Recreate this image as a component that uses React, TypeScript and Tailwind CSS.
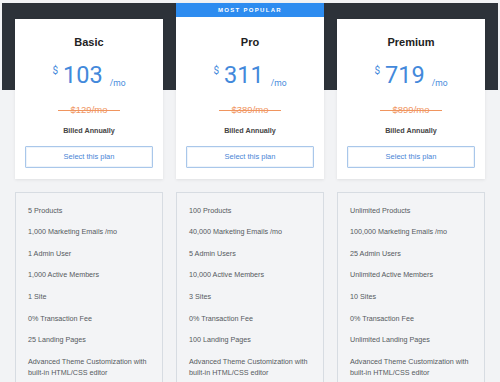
import React from 'react';

interface Plan {
  name: string;
  price: string;
  was: string;
  popular?: boolean;
  features: string[];
}

const plans: Plan[] = [
  {
    name: 'Basic',
    price: '103',
    was: '$129/mo',
    features: [
      '5 Products',
      '1,000 Marketing Emails /mo',
      '1 Admin User',
      '1,000 Active Members',
      '1 Site',
      '0% Transaction Fee',
      '25 Landing Pages',
    ],
  },
  {
    name: 'Pro',
    price: '311',
    was: '$389/mo',
    popular: true,
    features: [
      '100 Products',
      '40,000 Marketing Emails /mo',
      '5 Admin Users',
      '10,000 Active Members',
      '3 Sites',
      '0% Transaction Fee',
      '100 Landing Pages',
    ],
  },
  {
    name: 'Premium',
    price: '719',
    was: '$899/mo',
    features: [
      'Unlimited Products',
      '100,000 Marketing Emails /mo',
      '25 Admin Users',
      'Unlimited Active Members',
      '10 Sites',
      '0% Transaction Fee',
      'Unlimited Landing Pages',
    ],
  },
];

const PlanCard: React.FC<{ plan: Plan }> = ({ plan }) => (
  <div className="flex flex-col shadow-[0_1px_3px_rgba(0,0,0,0.08)]">
    {plan.popular && (
      <div className="h-[14px] bg-[#2d8cf0] text-white text-[6px] font-bold tracking-[1.3px] leading-[14px] text-center">
        MOST POPULAR
      </div>
    )}
    <div className={`bg-white px-[10px] pb-[11px] text-center ${plan.popular ? 'pt-[19px]' : 'pt-[17px]'}`}>
      <h3 className="text-[11px] leading-[12px] font-bold text-[#222]">{plan.name}</h3>
      <div className="mt-[15px] h-[24px] flex justify-center items-start text-[#4389db] font-['Roboto',sans-serif]">
        <span className="text-[10px] leading-[10px] mt-[3px] mr-[5px]">$</span>
        <span className="text-[23.5px] leading-[24px] font-normal">{plan.price}</span>
        <span className="text-[8.5px] leading-[10px] ml-[7px] mt-[15px]">/mo</span>
      </div>
      <div className="mt-[17px] h-[12px] flex justify-center">
        <span className="px-[13px] text-[9.5px] leading-[12px] text-[#f0955f] bg-[linear-gradient(#f0955f,#f0955f)] bg-no-repeat bg-center bg-[length:100%_1px]">
          {plan.was}
        </span>
      </div>
      <p className="mt-[10px] text-[7.2px] leading-[10px] font-bold text-[#444]">Billed Annually</p>
      <button className="mt-[10px] w-full h-[22px] border border-[#a9c7ea] rounded-[1px] bg-white shadow-[inset_0_0_0_1px_#eef4fb] text-[7.5px] text-[#4a86d6]">
        Select this plan
      </button>
    </div>
  </div>
);

const FeatureList: React.FC<{ features: string[] }> = ({ features }) => (
  <div className="border border-[#d7dce2] bg-[#f3f4f6] pl-[12px] pr-[8px] pt-[11.5px] pb-[30px]">
    <ul className="flex flex-col gap-[10.67px] text-[7.2px] leading-[11px] text-[#555a60]">
      {features.map((f) => (
        <li key={f} className="whitespace-nowrap">{f}</li>
      ))}
      <li className="whitespace-nowrap">
        Advanced Theme Customization with
        <br />
        built-in HTML/CSS editor
      </li>
    </ul>
  </div>
);

export default function App() {
  return (
    <div className="min-h-screen bg-[#f2f3f5] pt-[3px] px-[2px] font-['Liberation_Sans',Arial,sans-serif]">
      <div className="bg-[linear-gradient(to_bottom,#2d3239_87px,#f2f3f5_87px)] px-[13px]">
        <div className="grid grid-cols-3 gap-x-[13px] items-end">
          {plans.map((p) => (
            <PlanCard key={p.name} plan={p} />
          ))}
        </div>
        <div className="grid grid-cols-3 gap-x-[13px] mt-[13px]">
          {plans.map((p) => (
            <FeatureList key={p.name} features={p.features} />
          ))}
        </div>
      </div>
    </div>
  );
}
